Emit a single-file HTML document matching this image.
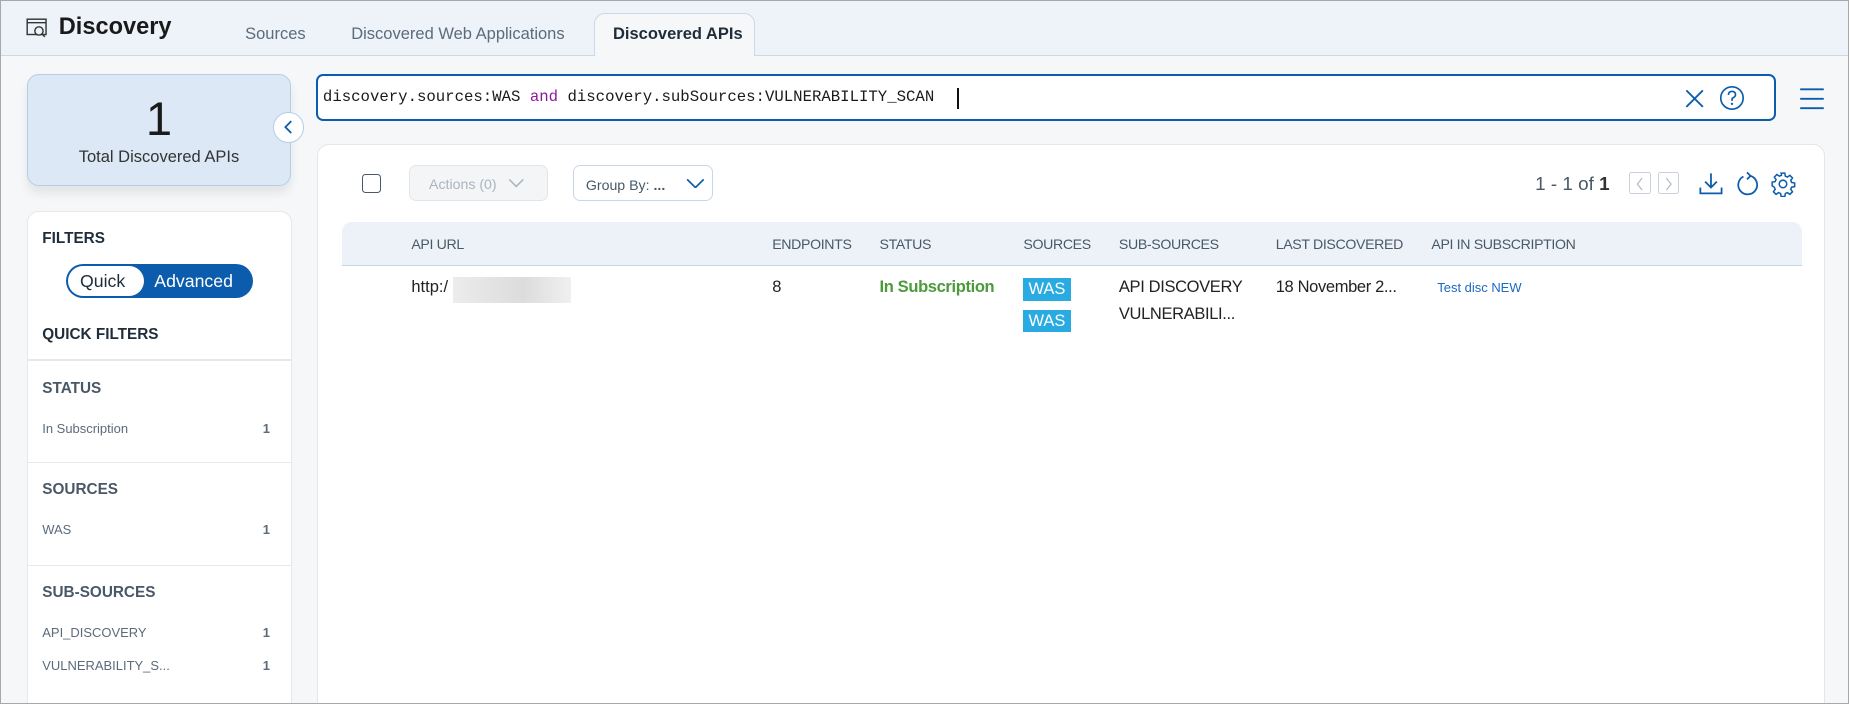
<!DOCTYPE html>
<html><head><meta charset="utf-8"><style>
html,body{margin:0;padding:0;background:#f5f7f9;overflow:hidden}
#w{zoom:1.17921;width:1568px;height:597px;position:relative;font-family:"Liberation Sans",sans-serif;box-sizing:border-box;border:1px solid #a8a8a8;background:#f5f7f9;overflow:hidden}
.a{position:absolute}
.t{position:absolute;white-space:nowrap}
.hd{color:#495867;font-size:12px;letter-spacing:-0.3px}
</style></head><body><div id="w">
<div class="a" style="left:0;top:0;width:1568px;height:46px;background:#eef3f9;border-bottom:1px solid #c9d9ea"></div>
<svg class="a" style="left:21px;top:14px" width="20" height="18" viewBox="0 0 20 18" fill="none" stroke="#333" stroke-width="1.2"><rect x="1" y="1" width="16" height="13"/><line x1="1" y1="4" x2="17" y2="4"/><circle cx="11" cy="11" r="3.5" fill="#eef3f9"/><line x1="13.5" y1="13.5" x2="16" y2="16"/></svg>
<div class="t" style="left:49px;top:10px;font-size:20px;font-weight:bold;color:#1a1a1a">Discovery</div>
<div class="t" style="left:207px;top:20px;font-size:14px;color:#5b6b7b">Sources</div>
<div class="t" style="left:297px;top:20px;font-size:14px;color:#5b6b7b">Discovered Web Applications</div>
<div class="a" style="left:503px;top:10px;width:136px;height:37px;background:#f5f7f9;border:1px solid #c9d9ea;border-bottom:none;border-radius:9px 9px 0 0;box-sizing:border-box"></div>
<div class="t" style="left:519px;top:20px;font-size:14px;font-weight:bold;color:#1f2d3a">Discovered APIs</div>

<div class="a" style="left:22px;top:62px;width:224px;height:95px;background:#dce8f5;border:1px solid #b6cde6;border-radius:10px;box-sizing:border-box;box-shadow:0 6px 8px rgba(0,0,0,0.08)"></div>
<div class="t" style="left:22px;width:224px;text-align:center;top:76px;font-size:40px;color:#1a1a1a">1</div>
<div class="t" style="left:22px;width:224px;text-align:center;top:125px;font-size:14px;color:#333">Total Discovered APIs</div>
<div class="a" style="left:231px;top:94px;width:26px;height:26px;border-radius:50%;background:#fff;border:1px solid #b6cde6;box-sizing:border-box"></div>
<svg class="a" style="left:239px;top:101px" width="10" height="12"><path d="M7 1 L2 6 L7 11" stroke="#0b5cad" stroke-width="1.5" fill="none"/></svg>

<div class="a" style="left:22px;top:178px;width:225px;height:430px;background:#fff;border:1px solid #e5e8ec;border-radius:10px;box-sizing:border-box"></div>
<div class="t" style="left:35px;top:194px;font-size:13px;font-weight:bold;color:#1f2d3a">FILTERS</div>
<div class="a" style="left:55px;top:223px;width:159px;height:29px;background:#0b5cad;border-radius:15px"></div>
<div class="a" style="left:57px;top:225px;width:64px;height:25px;background:#fff;border-radius:13px"></div>
<div class="t" style="left:67px;top:229px;font-size:15px;color:#1f2d3a">Quick</div>
<div class="t" style="left:130px;top:229px;font-size:15px;color:#fff">Advanced</div>
<div class="t" style="left:35px;top:276px;font-size:13px;font-weight:bold;color:#1f2d3a">QUICK FILTERS</div>
<div class="a" style="left:23px;top:304px;width:223px;height:1px;background:#e5e8ec"></div>
<div class="t" style="left:35px;top:321px;font-size:13px;font-weight:bold;color:#495867">STATUS</div>
<div class="t" style="left:35px;top:356px;font-size:11px;color:#5b6b7b">In Subscription</div>
<div class="t" style="left:222px;top:356px;font-size:11px;font-weight:bold;color:#5b6b7b">1</div>
<div class="a" style="left:23px;top:391px;width:223px;height:1px;background:#e5e8ec"></div>
<div class="t" style="left:35px;top:407px;font-size:13px;font-weight:bold;color:#495867">SOURCES</div>
<div class="t" style="left:35px;top:442px;font-size:11px;color:#5b6b7b">WAS</div>
<div class="t" style="left:222px;top:442px;font-size:11px;font-weight:bold;color:#5b6b7b">1</div>
<div class="a" style="left:23px;top:478px;width:223px;height:1px;background:#e5e8ec"></div>
<div class="t" style="left:35px;top:494px;font-size:13px;font-weight:bold;color:#495867">SUB-SOURCES</div>
<div class="t" style="left:35px;top:529px;font-size:11px;color:#5b6b7b">API_DISCOVERY</div>
<div class="t" style="left:222px;top:529px;font-size:11px;font-weight:bold;color:#5b6b7b">1</div>
<div class="t" style="left:35px;top:557px;font-size:11px;color:#5b6b7b">VULNERABILITY_S...</div>
<div class="t" style="left:222px;top:557px;font-size:11px;font-weight:bold;color:#5b6b7b">1</div>

<div class="a" style="left:267px;top:62px;width:1238px;height:40px;background:#fff;border:2px solid #0b5cad;border-radius:6px;box-sizing:border-box"></div>
<div class="t" style="left:273px;top:74px;font-family:'Liberation Mono',monospace;font-size:13.3px;color:#1a1a1a">discovery.sources:WAS <span style="color:#8b1a9a">and</span> discovery.subSources:VULNERABILITY_SCAN</div>
<div class="a" style="left:811px;top:74px;width:1px;height:18px;background:#111"></div>
<svg class="a" style="left:1427px;top:74px" width="18" height="18"><path d="M2 2 L16 16 M16 2 L2 16" stroke="#0b5cad" stroke-width="1.6"/></svg>
<svg class="a" style="left:1457px;top:71px" width="22" height="22"><circle cx="11" cy="11" r="9.5" stroke="#0b5cad" stroke-width="1.4" fill="none"/><path d="M8 8.5 Q8 5.5 11 5.5 Q14 5.5 14 8.3 Q14 10 11.2 11.3 L11 13.5" stroke="#0b5cad" stroke-width="1.4" fill="none"/><circle cx="11" cy="16" r="1" fill="#0b5cad"/></svg>
<svg class="a" style="left:1525px;top:73px" width="22" height="20"><path d="M1 2 H21 M1 10 H21 M1 18 H21" stroke="#0b5cad" stroke-width="1.6"/></svg>

<div class="a" style="left:268px;top:121px;width:1279px;height:490px;background:#fff;border:1px solid #e3e6ea;border-radius:10px;box-sizing:border-box"></div>
<div class="a" style="left:306px;top:147px;width:16px;height:16px;border:1.5px solid #495867;border-radius:3px;box-sizing:border-box"></div>
<div class="a" style="left:346px;top:139px;width:118px;height:31px;background:#f3f5f7;border:1px solid #e1e5ea;border-radius:6px;box-sizing:border-box"></div>
<div class="t" style="left:363px;top:148px;font-size:12px;color:#a9b4bf">Actions (0)</div>
<svg class="a" style="left:430px;top:149px" width="14" height="10"><path d="M1 2 L7 8 L13 2" stroke="#a9b4bf" stroke-width="1.3" fill="none"/></svg>
<div class="a" style="left:485px;top:139px;width:119px;height:31px;background:#fff;border:1px solid #c6d7ea;border-radius:6px;box-sizing:border-box"></div>
<div class="t" style="left:496px;top:149px;font-size:12px;color:#495867">Group By: <b>...</b></div>
<svg class="a" style="left:581px;top:149px" width="16" height="10"><path d="M1 2 L8 9 L15 2" stroke="#0b5cad" stroke-width="1.4" fill="none"/></svg>
<div class="t" style="left:1301px;top:146px;font-size:16px;color:#495867">1 - 1 of <b style="color:#333">1</b></div>
<div class="a" style="left:1381px;top:145px;width:18px;height:19px;border:1px solid #c9d2dc;border-radius:2px;box-sizing:border-box"></div>
<div class="a" style="left:1405px;top:145px;width:18px;height:19px;border:1px solid #c9d2dc;border-radius:2px;box-sizing:border-box"></div>
<svg class="a" style="left:1386px;top:149px" width="8" height="12"><path d="M6 1 L2 6 L6 11" stroke="#b0bac5" fill="none"/></svg>
<svg class="a" style="left:1410px;top:149px" width="8" height="12"><path d="M2 1 L6 6 L2 11" stroke="#b0bac5" fill="none"/></svg>
<svg class="a" style="left:1439px;top:144px" width="22" height="22"><path d="M11 2 V14 M6 9 L11 14 L16 9 M2 14 V19 H20 V14" stroke="#0b5cad" stroke-width="1.5" fill="none"/></svg>
<svg class="a" style="left:1470px;top:143px" width="22" height="24"><path d="M14 5 A8 8 0 1 1 8 5.5" stroke="#0b5cad" stroke-width="1.5" fill="none"/><path d="M11 2 L14 5 L11 8" stroke="#0b5cad" stroke-width="1.5" fill="none"/></svg>
<svg class="a" style="left:1500px;top:144px" width="22" height="22" viewBox="0 0 24 24"><path d="M10.3 2h3.4l.5 2.8 1.9.8 2.3-1.6 2.4 2.4-1.6 2.3.8 1.9 2.8.5v3.4l-2.8.5-.8 1.9 1.6 2.3-2.4 2.4-2.3-1.6-1.9.8-.5 2.8h-3.4l-.5-2.8-1.9-.8-2.3 1.6-2.4-2.4 1.6-2.3-.8-1.9L2 13.7v-3.4l2.8-.5.8-1.9L4 5.6 6.4 3.2l2.3 1.6 1.9-.8z" stroke="#0b5cad" stroke-width="1.4" fill="none"/><circle cx="12" cy="12" r="3.5" stroke="#0b5cad" stroke-width="1.4" fill="none"/></svg>

<div class="a" style="left:289px;top:187px;width:1238px;height:37px;background:#edf2f8;border-bottom:1px solid #c6d7ea;border-radius:8px 8px 0 0"></div>
<div class="t hd" style="left:348px;top:199px">API URL</div>
<div class="t hd" style="left:654px;top:199px">ENDPOINTS</div>
<div class="t hd" style="left:745px;top:199px">STATUS</div>
<div class="t hd" style="left:867px;top:199px">SOURCES</div>
<div class="t hd" style="left:948px;top:199px">SUB-SOURCES</div>
<div class="t hd" style="left:1081px;top:199px">LAST DISCOVERED</div>
<div class="t hd" style="left:1213px;top:199px">API IN SUBSCRIPTION</div>

<div class="t" style="left:348px;top:235px;font-size:14px;color:#222">http:/</div>
<div class="a" style="left:383px;top:234px;width:100px;height:22px;background:linear-gradient(90deg,#ececec,#dcdcdc 60%,#f0f0f0)"></div>
<div class="t" style="left:654px;top:235px;font-size:14px;color:#222">8</div>
<div class="t" style="left:745px;top:235px;font-size:14px;font-weight:bold;color:#4b9b3a;letter-spacing:-0.3px">In Subscription</div>
<div class="a" style="left:867px;top:235px;width:40px;height:19px;background:#29abe2"></div>
<div class="t" style="left:867px;width:40px;text-align:center;top:237px;font-size:14px;color:#fff">WAS</div>
<div class="a" style="left:867px;top:262px;width:40px;height:19px;background:#29abe2"></div>
<div class="t" style="left:867px;width:40px;text-align:center;top:264px;font-size:14px;color:#fff">WAS</div>
<div class="t" style="left:948px;top:235px;font-size:14px;color:#222;letter-spacing:-0.3px">API DISCOVERY</div>
<div class="t" style="left:948px;top:258px;font-size:14px;color:#222;letter-spacing:-0.3px">VULNERABILI...</div>
<div class="t" style="left:1081px;top:235px;font-size:14px;color:#222;letter-spacing:-0.3px">18 November 2...</div>
<div class="t" style="left:1218px;top:237px;font-size:11px;color:#1b6ac4">Test disc NEW</div>
</div></body></html>
